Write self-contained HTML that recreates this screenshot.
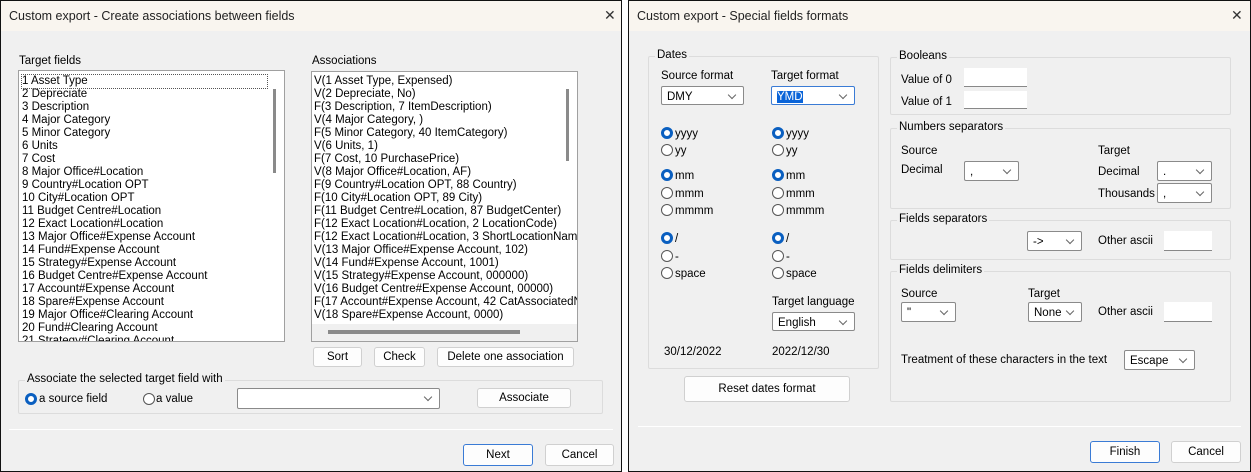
<!DOCTYPE html>
<html><head><meta charset="utf-8"><style>
*{box-sizing:border-box;margin:0;padding:0}
body{width:1251px;height:472px;background:#fff;position:relative;overflow:hidden;font-family:"Liberation Sans",sans-serif;font-size:11.5px;color:#000}
.a{position:absolute;white-space:nowrap;margin-top:2px}
.dlg{position:absolute;background:#f0f0f0;border:1px solid #111}
.tb{position:absolute;left:0;right:0;top:0;height:30px;background:#f9f5ef;font-size:12.5px;padding:8px 0 0 8px;color:#222}
.x{position:absolute;top:6px;font-size:14px;color:#333}
.box{position:absolute;background:#fff;border:1px solid #a0a0a0}
.btn{position:absolute;background:#fdfdfd;border:1px solid #d0d0d0;border-radius:3px;text-align:center;line-height:19px}
.cb{position:absolute;background:#fff;border:1px solid #8a8a8a;border-radius:2px;padding:4px 0 0 5px;white-space:nowrap}
.cb:after{content:"";position:absolute;right:8px;top:5px;width:5px;height:5px;border-right:1px solid #666;border-bottom:1px solid #666;transform:rotate(45deg)}
.inp{position:absolute;background:#fff;border-bottom:1px solid #888}
.grp{position:absolute;border:1px solid #dcdcdc;border-radius:2px}
.gl{position:absolute;background:#f0f0f0;padding:0 2px;top:-8px;left:6px;white-space:nowrap}
.r{position:absolute;width:12px;height:12px;border-radius:50%;border:1px solid #555;background:#fff;margin-top:2px}
.r.on{border:3.5px solid #0a5fc0;background:#fff}
.sep{position:absolute;height:1px;background:#b8b8b8;border-bottom:1px solid #fff}
.list div{height:13px;line-height:13px;white-space:nowrap}
</style></head><body>

<div class="dlg" style="left:0;top:0;width:622px;height:472px">
<div class="tb">Custom export - Create associations between fields</div>
<div class="x" style="left:603px">✕</div>
</div>
<div class="a" style="left:19px;top:53px">Target fields</div>
<div class="box" style="left:18px;top:70px;width:267px;height:272px;overflow:hidden">
<div class="list" style="position:absolute;left:3px;top:4px">
<div style="outline:1px dotted #555;width:245px">1 Asset Type</div><div>2 Depreciate</div><div>3 Description</div><div>4 Major Category</div><div>5 Minor Category</div><div>6 Units</div><div>7 Cost</div><div>8 Major Office#Location</div><div>9 Country#Location OPT</div><div>10 City#Location OPT</div><div>11 Budget Centre#Location</div><div>12 Exact Location#Location</div><div>13 Major Office#Expense Account</div><div>14 Fund#Expense Account</div><div>15 Strategy#Expense Account</div><div>16 Budget Centre#Expense Account</div><div>17 Account#Expense Account</div><div>18 Spare#Expense Account</div><div>19 Major Office#Clearing Account</div><div>20 Fund#Clearing Account</div><div>21 Strategy#Clearing Account</div>
</div>
<div style="position:absolute;left:254px;top:18px;width:3px;height:84px;background:#8a8a8a"></div>
</div>
<div class="a" style="left:312px;top:53px">Associations</div>
<div class="box" style="left:311px;top:71px;width:267px;height:271px;overflow:hidden">
<div class="list" style="position:absolute;left:2px;top:3px">
<div>V(1 Asset Type, Expensed)</div><div>V(2 Depreciate, No)</div><div>F(3 Description, 7 ItemDescription)</div><div>V(4 Major Category, )</div><div>F(5 Minor Category, 40 ItemCategory)</div><div>V(6 Units, 1)</div><div>F(7 Cost, 10 PurchasePrice)</div><div>V(8 Major Office#Location, AF)</div><div>F(9 Country#Location OPT, 88 Country)</div><div>F(10 City#Location OPT, 89 City)</div><div>F(11 Budget Centre#Location, 87 BudgetCenter)</div><div>F(12 Exact Location#Location, 2 LocationCode)</div><div>F(12 Exact Location#Location, 3 ShortLocationName)</div><div>V(13 Major Office#Expense Account, 102)</div><div>V(14 Fund#Expense Account, 1001)</div><div>V(15 Strategy#Expense Account, 000000)</div><div>V(16 Budget Centre#Expense Account, 00000)</div><div>F(17 Account#Expense Account, 42 CatAssociatedNum)</div><div>V(18 Spare#Expense Account, 0000)</div>
</div>
<div style="position:absolute;left:0;top:252px;width:265px;height:18px;background:#f0f0f0"></div>
<div style="position:absolute;left:16px;top:258px;width:192px;height:4px;background:#8a8a8a"></div>
<div style="position:absolute;left:254px;top:17px;width:3px;height:72px;background:#8a8a8a"></div>
</div>
<div class="btn" style="left:313px;top:347px;width:49px;height:20px">Sort</div>
<div class="btn" style="left:374px;top:347px;width:51px;height:20px">Check</div>
<div class="btn" style="left:437px;top:347px;width:137px;height:20px">Delete one association</div>
<div class="grp" style="left:18px;top:380px;width:585px;height:34px"><div class="gl">Associate the selected target field with</div></div>
<div class="r on" style="left:25px;top:391px"></div><div class="a" style="left:39px;top:391px">a source field</div>
<div class="r" style="left:143px;top:391px"></div><div class="a" style="left:156px;top:391px">a value</div>
<div class="cb" style="left:237px;top:388px;width:203px;height:21px"></div>
<div class="btn" style="left:477px;top:388px;width:94px;height:20px">Associate</div>
<div class="sep" style="left:9px;top:429px;width:604px"></div>
<div class="btn" style="left:463px;top:444px;width:70px;height:22px;line-height:20px;border:1px solid #3a7bd5">Next</div>
<div class="btn" style="left:545px;top:444px;width:69px;height:22px;line-height:20px">Cancel</div>

<div class="dlg" style="left:628px;top:0;width:623px;height:472px">
<div class="tb">Custom export - Special fields formats</div>
<div class="x" style="left:602px">✕</div>
</div>
<div class="grp" style="left:648px;top:56px;width:231px;height:313px"><div class="gl">Dates</div></div>
<div class="a" style="left:661px;top:68px">Source format</div>
<div class="a" style="left:771px;top:68px">Target format</div>
<div class="cb" style="left:661px;top:86px;width:83px;height:19px">DMY</div>
<div class="cb" style="left:771px;top:86px;width:84px;height:19px;border-color:#3a7bd5"><span style="background:#0a64d8;color:#fff">YMD</span></div>
<div class="r on" style="left:661px;top:125px"></div><div class="a" style="left:675px;top:126px">yyyy</div>
<div class="r" style="left:661px;top:142px"></div><div class="a" style="left:675px;top:143px">yy</div>
<div class="r on" style="left:661px;top:167px"></div><div class="a" style="left:675px;top:168px">mm</div>
<div class="r" style="left:661px;top:185px"></div><div class="a" style="left:675px;top:186px">mmm</div>
<div class="r" style="left:661px;top:202px"></div><div class="a" style="left:675px;top:203px">mmmm</div>
<div class="r on" style="left:661px;top:230px"></div><div class="a" style="left:675px;top:231px">/</div>
<div class="r" style="left:661px;top:248px"></div><div class="a" style="left:675px;top:249px">-</div>
<div class="r" style="left:661px;top:265px"></div><div class="a" style="left:675px;top:266px">space</div>
<div class="r on" style="left:772px;top:125px"></div><div class="a" style="left:786px;top:126px">yyyy</div>
<div class="r" style="left:772px;top:142px"></div><div class="a" style="left:786px;top:143px">yy</div>
<div class="r on" style="left:772px;top:167px"></div><div class="a" style="left:786px;top:168px">mm</div>
<div class="r" style="left:772px;top:185px"></div><div class="a" style="left:786px;top:186px">mmm</div>
<div class="r" style="left:772px;top:202px"></div><div class="a" style="left:786px;top:203px">mmmm</div>
<div class="r on" style="left:772px;top:230px"></div><div class="a" style="left:786px;top:231px">/</div>
<div class="r" style="left:772px;top:248px"></div><div class="a" style="left:786px;top:249px">-</div>
<div class="r" style="left:772px;top:265px"></div><div class="a" style="left:786px;top:266px">space</div>
<div class="a" style="left:772px;top:294px">Target language</div>
<div class="cb" style="left:772px;top:312px;width:83px;height:19px">English</div>
<div class="a" style="left:664px;top:344px">30/12/2022</div>
<div class="a" style="left:772px;top:344px">2022/12/30</div>
<div class="btn" style="left:684px;top:376px;width:166px;height:26px;line-height:24px">Reset dates format</div>

<div class="grp" style="left:890px;top:57px;width:341px;height:58px"><div class="gl">Booleans</div></div>
<div class="a" style="left:901px;top:72px">Value of 0</div><div class="inp" style="left:964px;top:68px;width:63px;height:19px"></div>
<div class="a" style="left:901px;top:94px">Value of 1</div><div class="inp" style="left:964px;top:91px;width:63px;height:18px"></div>
<div class="grp" style="left:890px;top:128px;width:341px;height:81px"><div class="gl">Numbers separators</div></div>
<div class="a" style="left:901px;top:143px">Source</div><div class="a" style="left:901px;top:162px">Decimal</div>
<div class="cb" style="left:964px;top:161px;width:55px;height:20px">,</div>
<div class="a" style="left:1098px;top:143px">Target</div><div class="a" style="left:1098px;top:164px">Decimal</div>
<div class="cb" style="left:1157px;top:161px;width:55px;height:20px">.</div>
<div class="a" style="left:1098px;top:186px">Thousands</div>
<div class="cb" style="left:1157px;top:183px;width:55px;height:20px">,</div>
<div class="grp" style="left:890px;top:220px;width:341px;height:40px"><div class="gl">Fields separators</div></div>
<div class="cb" style="left:1027px;top:231px;width:55px;height:20px">-&gt;</div>
<div class="a" style="left:1098px;top:233px">Other ascii</div><div class="inp" style="left:1164px;top:231px;width:48px;height:20px"></div>
<div class="grp" style="left:890px;top:271px;width:341px;height:131px"><div class="gl">Fields delimiters</div></div>
<div class="a" style="left:901px;top:286px">Source</div><div class="cb" style="left:901px;top:302px;width:55px;height:20px">"</div>
<div class="a" style="left:1028px;top:286px">Target</div><div class="cb" style="left:1028px;top:302px;width:54px;height:20px">None</div>
<div class="a" style="left:1098px;top:304px">Other ascii</div><div class="inp" style="left:1164px;top:302px;width:48px;height:20px"></div>
<div class="a" style="left:901px;top:352px">Treatment of these characters in the text</div>
<div class="cb" style="left:1124px;top:350px;width:71px;height:20px">Escape</div>
<div class="sep" style="left:638px;top:426px;width:603px"></div>
<div class="btn" style="left:1090px;top:441px;width:70px;height:22px;line-height:20px;border:1px solid #3a7bd5">Finish</div>
<div class="btn" style="left:1171px;top:441px;width:70px;height:22px;line-height:20px">Cancel</div>
</body></html>
